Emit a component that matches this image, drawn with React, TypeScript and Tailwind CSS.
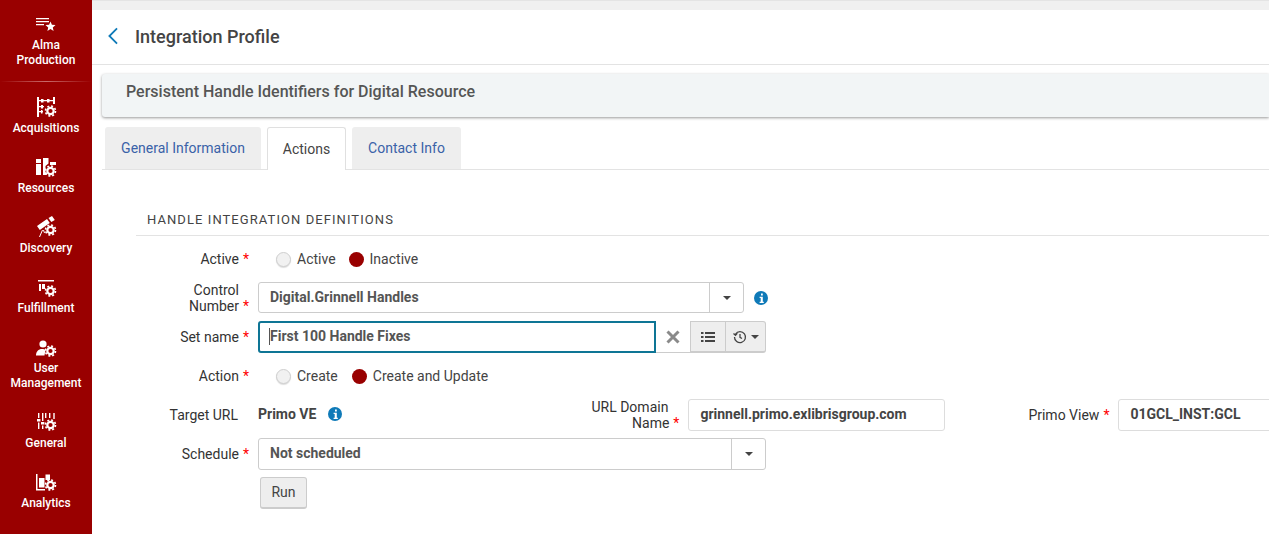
import React from 'react';

const Gear: React.FC<{ cx?: number; cy?: number }> = ({ cx = 16.5, cy = 16 }) => (
  <g fill="none" stroke="#fff">
    <circle cx={cx} cy={cy} r={3.2} strokeWidth={2.2} />
    <circle cx={cx} cy={cy} r={5} strokeWidth={1.6} strokeDasharray="2 1.93" />
  </g>
);

const icons: Record<string, React.ReactNode> = {
  acquisitions: (
    <>
      <path d="M3 2h2v20H3zM19 2h2v7h-2zM5 5h14v1.300H5zM5 11h5v1.300H5zM5 16h4v1.300H5zM7 4h2.500v3.400H7zM7 10h2v3.400H7zM7 15h1.500v3.400H7zM13 4h2.500v3.400H13z" fill="#fff" />
      <Gear />
    </>
  ),
  resources: (
    <>
      <path d="M2 4h5v16H2zM9 3h5.500v5.500L11.500 11v6l1.500 3H9zM16 7h6v3h-6z" fill="#fff" />
      <path d="M2 8h5v1H2z" fill="#990000" />
      <Gear />
    </>
  ),
  discovery: (
    <>
      <path d="M3 11l10-7 2.800 4-10 7zM14.500 3l3.500-2 2.800 4-3.500 2z" fill="#fff" />
      <path d="M8.500 15l-3 7M9.500 15l1 3" stroke="#fff" strokeWidth={1} fill="none" />
      <Gear cy={15} />
    </>
  ),
  fulfillment: (
    <>
      <path d="M4 5h16v1.500H4zM5 9h2v7H5zM8 9h3v5H8z" fill="#fff" />
      <Gear />
    </>
  ),
  user: (
    <>
      <circle cx={9} cy={9} r={3.600} fill="#fff" />
      <path d="M2 20.500c0-4 2.500-6.500 6-6.500 1.500 0 2.500.3 3.500 1l-1 5.500z" fill="#fff" />
      <Gear />
    </>
  ),
  general: (
    <>
      <path d="M4 3h1.400v5H4zM3 9h3.400v2.500H3zM4 12.500h1.400V19H4zM8 3h1.400v8H8zM7 12h3.400v2.500H7zM8 15.500h1.400V19H8zM11 3h1.400v5H11zM15 3h1.400v5H15zM19.300 3h1.400v6h-1.400z" fill="#fff" />
      <Gear cy={15} />
    </>
  ),
  analytics: (
    <>
      <path d="M2 4h1.500v15H11v1.500H2zM5 8h5.500v9.500H5zM11.500 4.500H16V10h-4.500z" fill="#fff" />
      <Gear cy={15} />
    </>
  ),
};

const NavItem: React.FC<{ icon: string; lines: string[]; className?: string }> = ({ icon, lines, className }) => (
  <div className={`flex flex-col items-center ${className ?? ''}`}>
    <svg viewBox="0 0 24 24" className="h-[24px] w-[24px]">{icons[icon]}</svg>
    <div className="mt-[2px] text-center text-[12px] font-medium leading-[15px] text-white">
      {lines.map(l => <div key={l}>{l}</div>)}
    </div>
  </div>
);

const Req = () => <span className="ml-[4px] text-[#f00]">*</span>;

const Radio: React.FC<{ on?: boolean; label: string }> = ({ on, label }) => (
  <span className="flex items-center">
    <span className={`h-[15px] w-[15px] rounded-full ${on ? 'bg-[#990000]' : 'border border-[#cfcfcf] bg-[#f1f1f1] shadow-[0_1px_1px_#ddd]'}`} />
    <span className="ml-[6px] text-[#444]">{label}</span>
  </span>
);

const Info = () => (
  <svg viewBox="0 0 14 14" className="h-[14px] w-[14px]">
    <circle cx={7} cy={7} r={7} fill="#0f7ab8" />
    <path d="M7 2.500h1.800v1.900H7zM5.600 5.700h3.200v5h1v1.200H5.600v-1.200h1.100V6.900H5.600z" fill="#fff" />
  </svg>
);

const Caret = () => <span className="h-0 w-0 border-x-[4px] border-t-[4px] border-x-transparent border-t-[#444]" />;

const Row: React.FC<{ label: React.ReactNode; className?: string; children: React.ReactNode }> = ({ label, className, children }) => (
  <div className={`flex items-center ${className ?? ''}`}>
    <div className="w-[113px] shrink-0 text-right leading-[16px] text-[#333]">{label}</div>
    <div className="ml-[9px] flex shrink-0 items-center">{children}</div>
  </div>
);

export default function App() {
  return (
    <div className="flex h-[534px] w-[1269px] overflow-hidden bg-white text-[14px] [font-family:Roboto,sans-serif]">
      <nav className="flex w-[92px] shrink-0 flex-col bg-[#990000]">
        <div className="flex flex-col items-center pt-[18px]">
          <svg viewBox="0 0 20 14" className="h-[14px] w-[20px]">
            <path d="M0 0h13v1.300H0zM0 3h13v1.300H0zM0 6h8v1.300H0z" fill="#fff" />
            <path d="M14.500 3.500l1.400 3.300 3.600.3-2.700 2.300.8 3.500-3.100-1.900-3.100 1.900.8-3.500-2.700-2.300 3.600-.3z" fill="#fff" />
          </svg>
          <div className="mt-[6px] text-center text-[12px] font-medium leading-[15px] text-white">
            <div>Alma</div>
            <div>Production</div>
          </div>
        </div>
        <div className="mt-[13px] h-px bg-gradient-to-r from-transparent via-[#c96a6a] to-transparent" />
        <NavItem icon="acquisitions" lines={['Acquisitions']} className="mt-[13px]" />
        <NavItem icon="resources" lines={['Resources']} className="mt-[19px]" />
        <NavItem icon="discovery" lines={['Discovery']} className="mt-[19px]" />
        <NavItem icon="fulfillment" lines={['Fulfillment']} className="mt-[19px]" />
        <NavItem icon="user" lines={['User', 'Management']} className="mt-[19px]" />
        <NavItem icon="general" lines={['General']} className="mt-[19px]" />
        <NavItem icon="analytics" lines={['Analytics']} className="mt-[19px]" />
      </nav>

      <main className="min-w-0 flex-1">
        <div className="h-[10px] border-t border-[#e4e4e4] bg-[#f0f0f0]" />
        <header className="flex h-[55px] items-center border-b border-[#e3e3e3] pb-[2px]">
          <svg viewBox="0 0 12 20" className="ml-[15px] h-[18px] w-[12px]" fill="none" stroke="#0f7ab8" strokeWidth={2}>
            <path d="M10.500 1.500L2 10l8.500 8.500" />
          </svg>
          <h1 className="ml-[16px] text-[18px] font-medium text-[#444]">Integration Profile</h1>
        </header>

        <div className="ml-[10px] mt-[9px] flex h-[43px] items-center rounded-l-[3px] bg-[#f2f5f6] pb-[8px] pl-[24px] text-[16px] font-medium text-[#555] shadow-[0_1px_3px_#999]">
          Persistent Handle Identifiers for Digital Resource
        </div>

        <div className="ml-[10px] mt-[10px] flex h-[43px] items-end gap-[6px] border-b border-[#e3e3e3] pl-[3px]">
          <div className="flex h-[42px] w-[156px] items-center justify-center rounded-t-[3px] bg-[#eeeeee] text-[#3a62a8]">General Information</div>
          <div className="-mb-px flex h-[43px] w-[79px] items-center justify-center rounded-t-[3px] border border-b-0 border-[#e0e0e0] bg-white text-[#444]">Actions</div>
          <div className="flex h-[42px] w-[109px] items-center justify-center rounded-t-[3px] bg-[#eeeeee] text-[#3a62a8]">Contact Info</div>
        </div>

        <section className="ml-[44px] mt-[40px]">
          <div className="h-[26px] border-b border-[#e3e3e3] pl-[11px] pt-[1px] text-[13px] leading-[18px] tracking-[1.07px] text-[#444]">HANDLE INTEGRATION DEFINITIONS</div>

          <Row label={<>Active<Req /></>} className="mt-[12px] h-[22px]">
            <div className="ml-[18px] flex items-center gap-[13px]">
              <Radio label="Active" />
              <Radio on label="Inactive" />
            </div>
          </Row>

          <Row label={<><span className="pr-[10px]">Control</span><br />Number<Req /></>} className="mt-[12px] h-[31px]">
            <div className="flex h-[31px] w-[486px] items-center rounded-[3px] border border-[#cccccc]">
              <span className="flex-1 pl-[11px] font-bold text-[#555]">Digital.Grinnell Handles</span>
              <span className="flex h-full w-[34px] items-center justify-center border-l border-[#cccccc]"><Caret /></span>
            </div>
            <span className="ml-[10px]"><Info /></span>
          </Row>

          <Row label={<>Set name<Req /></>} className="mt-[8px] h-[32px]">
            <div className="flex h-[32px] w-[398px] items-center rounded-l-[3px] border-2 border-[#0e7595] pb-[2px] pl-[9px] font-bold text-[#555]">
              <span className="h-[17px] w-px bg-[#555]" />First 100 Handle Fixes
            </div>
            <div className="flex h-[32px] w-[34px] items-center justify-center border-b border-[#cccccc]">
              <svg viewBox="0 0 14 14" className="h-[14px] w-[14px]" stroke="#8a8a8a" strokeWidth={3}>
                <path d="M1.500 1.500l11 11M12.500 1.500l-11 11" />
              </svg>
            </div>
            <div className="flex h-[32px] w-[36px] items-center justify-center border border-b-2 border-[#cccccc] bg-[#eeeeee]">
              <svg viewBox="0 0 14 10" className="h-[10px] w-[14px]" fill="#444">
                <path d="M0 0h2.500v2H0zM4 0h10v2H4zM0 4h2.500v2H0zM4 4h10v2H4zM0 8h2.500v2H0zM4 8h10v2H4z" />
              </svg>
            </div>
            <div className="flex h-[32px] w-[40px] items-center justify-center gap-[4px] rounded-r-[3px] border border-b-2 border-l-0 border-[#cccccc] bg-[#eeeeee]">
              <svg viewBox="0 0 14 14" className="h-[14px] w-[14px]" fill="none" stroke="#444" strokeWidth={1.300}>
                <path d="M2.500 4A5.500 5.500 0 1 1 1.500 7M.5 3.500l2 1.800 1.800-2M7 4v3.300l2 1.200" />
              </svg>
              <Caret />
            </div>
          </Row>

          <Row label={<>Action<Req /></>} className="mt-[12px] h-[22px]">
            <div className="ml-[18px] flex items-center gap-[14px]">
              <Radio label="Create" />
              <Radio on label="Create and Update" />
            </div>
          </Row>

          <Row label={<span className="pr-[11px]">Target URL</span>} className="mt-[12px] h-[32px]">
            <span className="shrink-0 whitespace-nowrap pb-[2px] font-bold text-[#444]">Primo VE</span>
            <span className="ml-[12px] -mt-[2px]"><Info /></span>
            <div className="ml-[226px] w-[111px] shrink-0 text-right leading-[16px] text-[#333]"><span className="pr-[11px]">URL Domain</span><br />Name<Req /></div>
            <div className="ml-[9px] flex h-[32px] w-[257px] shrink-0 items-center rounded-[3px] border border-[#dddddd] pb-[2px] pl-[11px] font-bold text-[#444]">grinnell.primo.exlibrisgroup.com</div>
            <div className="ml-[83px] shrink-0 text-[#333]">Primo View<Req /></div>
            <div className="ml-[9px] flex h-[32px] w-[170px] shrink-0 items-center rounded-[3px] border border-[#dddddd] pb-[2px] pl-[11px] font-bold text-[#444]">01GCL_INST:GCL</div>
          </Row>

          <Row label={<>Schedule<Req /></>} className="mt-[7px] h-[32px]">
            <div className="flex h-[32px] w-[508px] items-center rounded-[3px] border border-[#cccccc]">
              <span className="flex-1 pb-[2px] pl-[11px] font-bold text-[#555]">Not scheduled</span>
              <span className="flex h-full w-[34px] items-center justify-center border-l border-[#cccccc]"><Caret /></span>
            </div>
          </Row>

          <button className="ml-[124px] mt-[7px] flex h-[32px] w-[47px] items-center justify-center rounded-[3px] border border-b-2 border-[#cccccc] bg-[#eeeeee] text-[#444]">Run</button>
        </section>
      </main>
    </div>
  );
}
